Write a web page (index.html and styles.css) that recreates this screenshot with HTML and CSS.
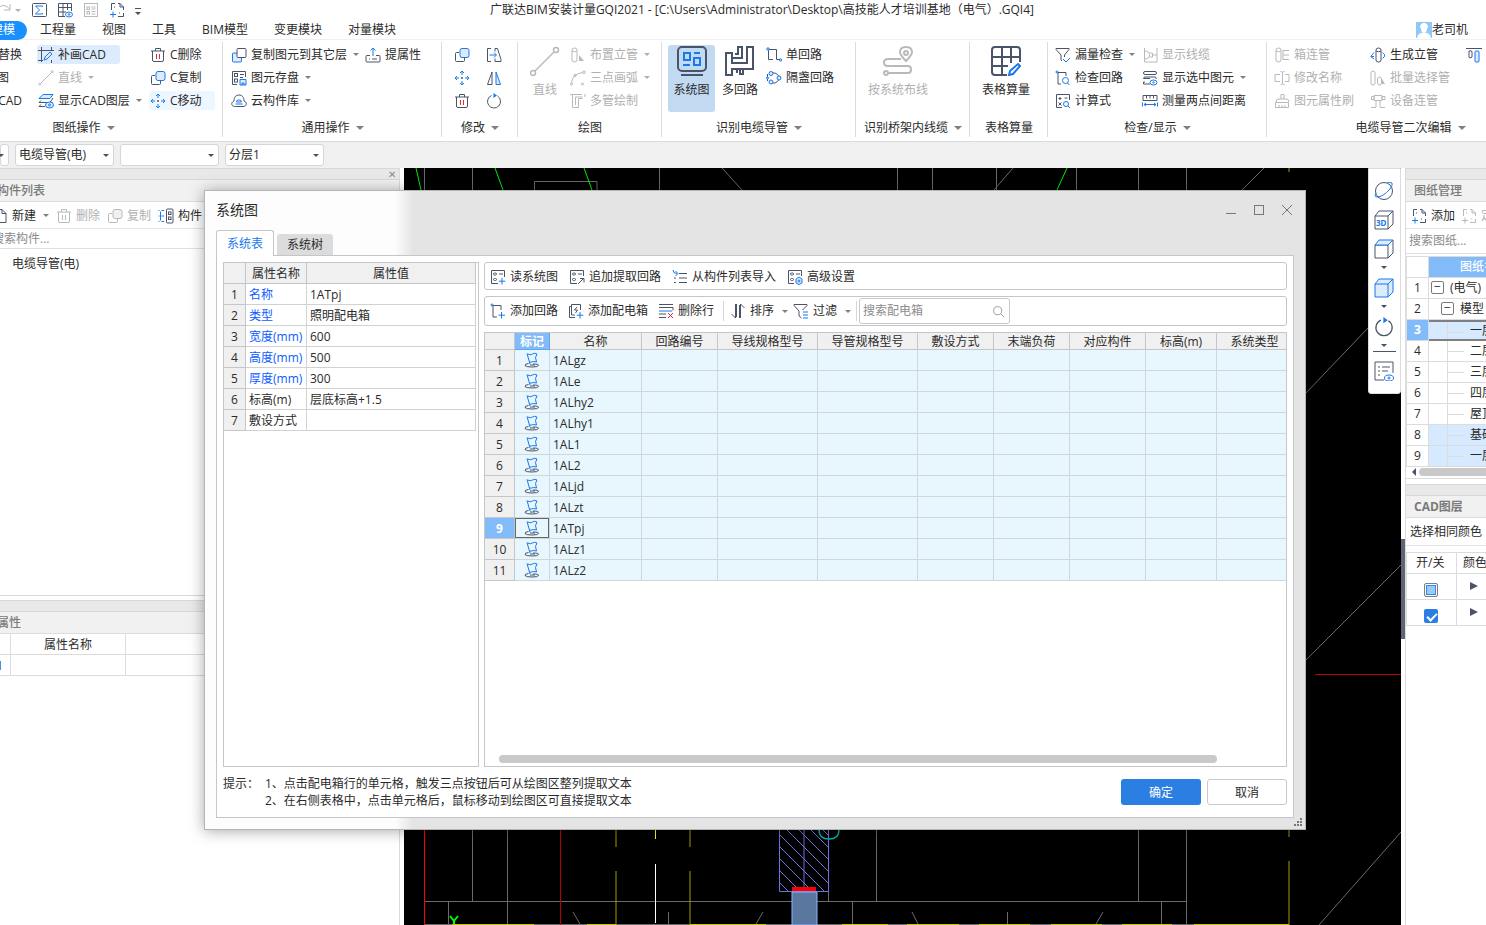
FILE: index.html
```html
<!DOCTYPE html>
<html lang="zh-CN">
<head>
<meta charset="utf-8">
<title>广联达BIM安装计量GQI2021</title>
<link rel="stylesheet" href="styles.css">
</head>
<body>
<svg class="defs" aria-hidden="true">
  <symbol id="redo" viewBox="0 0 16 16"><path d="M15 2v6H9M15 7.500Q10 1.500 5 4.500 1 8 4 13"/></symbol>
  <symbol id="sigma" viewBox="0 0 16 16"><rect x="1.500" y="1.500" width="14" height="13" rx="1"/><path class="a" d="M11.500 5V4h-7l4 4-4 4h7v-1"/></symbol>
  <symbol id="grideye" viewBox="0 0 16 16"><path d="M8 14.500H1.500v-13h13V9M1.500 5.500h13M1.500 10H9M6 1.500v13M10.500 1.500V8"/><ellipse class="a" cx="12" cy="12.500" rx="3.500" ry="2.500"/><circle class="a" cx="12" cy="12.500" r=".8"/></symbol>
  <symbol id="listbox" viewBox="0 0 16 16"><rect x="1.500" y="1.500" width="13" height="13"/><rect x="4" y="5" width="2.500" height="2.500"/><rect x="4" y="9.500" width="2.500" height="2.500"/><path d="M8.500 5h4M8.500 7h4M8.500 9.500h4M8.500 12h4"/></symbol>
  <symbol id="addpage" viewBox="0 0 16 16"><path d="M2.500 8V1.500H6M9 1.500h2l3.500 3.500v3M14.500 11v3.500H9M11 1.500V5h3.500M5 5h1M10 11h1"/><path class="a" d="M4 9.500v6M1 12.500h6"/></symbol>
  <symbol id="croppen" viewBox="0 0 16 16"><path d="M3.500 0v15M0 3.500h16M13.500 0v3M0 13.500h5M13.500 13v3"/><path class="a" d="M6 13l1-3 5-5 2 2-5 5z"/></symbol>
  <symbol id="line" viewBox="0 0 16 16"><path d="M2.500 13.500l11-11"/><circle cx="1.800" cy="14.200" r="1"/><circle cx="14.200" cy="1.800" r="1"/></symbol>
  <symbol id="layers" viewBox="0 0 16 16"><path class="af" d="M5 1.500h10l-3 4H1z"/><path d="M15 5l-3 4.500H1l2-2M1 13.500l2-2M1 13.500h6"/><ellipse class="af" cx="11.500" cy="12" rx="4" ry="3"/><circle class="a" cx="11.500" cy="12" r="1"/></symbol>
  <symbol id="trash" viewBox="0 0 16 16"><path d="M1 4h14M5.500 4V1.500h5V4M2.500 4v9q0 1.500 1.500 1.500h8q1.500 0 1.500-1.500V4"/><path class="r" d="M6.500 7v5M9.500 7v5"/></symbol>
  <symbol id="copyf" viewBox="0 0 16 16"><path d="M5 5.500H2.500q-1 0-1 1v7q0 1 1 1h7q1 0 1-1V11"/><rect class="af" x="6" y="1.500" width="9" height="9" rx="2"/></symbol>
  <symbol id="copyb" viewBox="0 0 16 16"><rect class="af" x="1.500" y="6" width="9" height="9" rx="1"/><rect class="w" x="6" y="1.500" width="9" height="9" rx="1"/></symbol>
  <symbol id="move" viewBox="0 0 16 16"><path class="a" d="M6 3l2-2 2 2M6 13l2 2 2-2M3 6L1 8l2 2M13 6l2 2-2 2M8 1v4M8 11v4M1 8h4M11 8h4"/><path d="M8 7v2M7 8h2"/></symbol>
  <symbol id="store" viewBox="0 0 16 16"><path d="M6 14.500H1.500v-13h13V7M9 4.500h4M9 7.500h3"/><rect x="3.500" y="3.500" width="3" height="3"/><rect x="3.500" y="9" width="3" height="3"/><path class="af" d="M9 9.500h6v5.500H9z"/><path class="a" d="M11 15v-2h2v2"/></symbol>
  <symbol id="cloud" viewBox="0 0 16 16"><path d="M4.500 13.500C1.500 13.500.500 12 .800 10.500 1 9 2 8.500 3 8 3 4 5 2 8 2s5 2 5 6c1.500.500 2.300 1.500 2.300 2.800 0 1.500-1 2.700-3.300 2.700z"/><path class="a" d="M4.500 11h7M5.500 9l1-2h3l1 2z"/></symbol>
  <symbol id="up" viewBox="0 0 16 16"><path d="M5 8.500H2q-1 0-1 1V14q0 1 1 1h12q1 0 1-1V9.500q0-1-1-1h-3M4 12h1M7 12h5"/><path class="a" d="M8 9V1M5.500 3.500L8 1l2.500 2.500"/></symbol>
  <symbol id="mirrorcopy" viewBox="0 0 16 16"><path d="M5 1.500H1.500v13H5M9 4.500V1.500h2.500L15 12.500v2h-6v-3"/><path class="a" d="M3.500 8H10M8 5.500L10.500 8 8 10.500"/></symbol>
  <symbol id="mirror" viewBox="0 0 16 16"><path d="M6 2v12.500H1.500z"/><path class="af" d="M10 2v12.500h4.500z"/></symbol>
  <symbol id="rotate" viewBox="0 0 16 16"><path d="M5.500 2.500a6.500 6.500 0 1 0 6 .5"/><path class="ab" d="M7.500 0l3.500 2.500L7.500 5z"/></symbol>
  <symbol id="pipe" viewBox="0 0 16 16"><path d="M2 3q0-2 2.500-2T7 3v10q0 2-2.500 2T2 13zM2 4q2.500 1.500 5 0"/><path class="k" d="M9 8l5 6H9z"/></symbol>
  <symbol id="arc" viewBox="0 0 16 16"><path d="M1.500 13Q2 4 13 2.500"/><circle cx="14" cy="2.200" r="1.300"/><circle cx="5" cy="5.500" r="1.200"/><circle cx="1.500" cy="14" r="1"/><circle cx="12.500" cy="14" r="1"/></symbol>
  <symbol id="multi" viewBox="0 0 16 16"><path d="M0 1.500h12M2.500 1.500v13h6v-9h4M5.500 4v8M5.500 4h7M15 1v3"/></symbol>
  <symbol id="single" viewBox="0 0 16 16"><path d="M2.500 2.500h8v10h3M2.500 3v9.500H7"/><circle class="af" cx="2" cy="2" r="1.200"/><circle class="af" cx="14.500" cy="13" r="1.200"/></symbol>
  <symbol id="bulb" viewBox="0 0 16 16"><path d="M4 3h5q3 1 5 5-2 4-5 5H4M1.500 4v7"/><circle class="af" cx="5" cy="3.500" r="2"/><circle class="af" cx="5" cy="12" r="2"/><circle class="af" cx="13" cy="8" r="2"/><circle class="af" cx="1.500" cy="8" r="1"/></symbol>
  <symbol id="funnelcheck" viewBox="0 0 16 16"><path d="M7 14l-1-1V8L1 2.500V1.500h13v1L9.500 8v2"/><path class="a" d="M8 12l3 3 4-4"/></symbol>
  <symbol id="checkloop" viewBox="0 0 16 16"><path d="M2 2.500h9V6M3 3v11h3"/><circle class="af" cx="2" cy="2" r="1"/><circle class="a" cx="10.500" cy="10.500" r="3"/><path class="a" d="M12.500 13l2 2"/></symbol>
  <symbol id="calc" viewBox="0 0 16 16"><path d="M7 14.500H1.500v-13h13V7M3.500 5.500h3M5 4v3M9.500 5h3M3.500 9.500l3 3M6.500 9.500l-3 3"/><circle class="a" cx="11" cy="11" r="2.500"/><path class="a" d="M13 13l2 2"/></symbol>
  <symbol id="cable" viewBox="0 0 16 16"><path d="M2.500 15V1M2.500 15H15V1M2.500 4q5 0 5 4t-5 4M7.500 6h3v4h-3M10.500 8H15"/></symbol>
  <symbol id="showsel" viewBox="0 0 16 16"><rect x="1.500" y="1.500" width="13" height="3" rx="1.500"/><path d="M14 9V8q0-1-1-1H3q-1.500 0-1.500 1.500H8M3 12H1.500v2H8"/><ellipse class="a" cx="11.500" cy="12.500" rx="3.500" ry="2.500"/><circle class="a" cx="11.500" cy="12.500" r=".7"/></symbol>
  <symbol id="measure" viewBox="0 0 16 16"><path d="M1 7.500v-5h14v5zM4.500 3v2.500M8 3v2.500M11.500 3v2.500"/><path class="a" d="M.5 9.500v4M15.500 9.500v4M2 11.500h12M4 10l-2 1.500L4 13M12 10l2 1.500-2 1.500"/></symbol>
  <symbol id="boxpipe" viewBox="0 0 16 16"><path d="M2 3q0-2 2.500-2T7 3v10q0 2-2.500 2T2 13zM2 4q2.500 1.500 5 0M9 3.500h6M9 8h6M9 12.500h6M9 3v10"/></symbol>
  <symbol id="rename" viewBox="0 0 16 16"><path d="M6 4.500H1v7h5M11 4.500h4v7h-4M8.500 2v12M6.500 1.500q2 0 2 1 0-1 2-1M6.500 14.500q2 0 2-1 0 1 2 1"/></symbol>
  <symbol id="brush" viewBox="0 0 16 16"><path d="M7 6V1.500h3V6M2 9q0-3 3-3h7q3 0 3 3M1.500 9.500h13v5h-13zM5 12v2.500M8 12v2.500M11 12v2.500"/></symbol>
  <symbol id="genpipe" viewBox="0 0 16 16"><path d="M6 3q0-2 2.500-2T11 3v10q0 2-2.500 2T6 13zM6 4q2.500 1.500 5 0"/><path class="a" d="M4 5.500L.8 9.500 4 12M12.500 5.500q3 2 2 4l-2 2M1 9.500h3"/></symbol>
  <symbol id="batch" viewBox="0 0 16 16"><path d="M1 3q0-2 2-2t2 2v10q0 2-2 2t-2-2zM7.500 9q0-2 2-2t2 2v4q0 2-2 2t-2-2z"/><path class="k" d="M12 9l3 5h-3z"/></symbol>
  <symbol id="device" viewBox="0 0 16 16"><path d="M4 3.500H1.500v3H4zM12 3.500h3v3h-3zM4 2.500h8v5H4zM6 8v6M10 8v6M1 14.500h5M10 14.500h5"/></symbol>
  <symbol id="align" viewBox="0 0 16 16"><path d="M0 1.500h16M3 4q3-1 3 1v5q-3 2-3 0z"/><rect class="af" x="9" y="4" width="4" height="11" rx="1"/></symbol>
  <symbol id="new" viewBox="0 0 16 16"><path d="M2 1.500h8l4 4v9H2zM10 1.500v4h4"/></symbol>
  <symbol id="struct" viewBox="0 0 16 16"><rect x="8.500" y="1" width="6.500" height="14" rx="1"/><rect x="10.500" y="4" width="2.500" height="2.500"/><rect x="10.500" y="9" width="2.500" height="2.500"/><path class="a" d="M.5 2.500h1M3.500 2.500H6M.5 8h1M3.500 8H6M.5 13.500h1M3.500 13.500H6M2.500 3.500v9"/></symbol>
  <symbol id="read" viewBox="0 0 16 16"><path d="M8 14.500H1.500v-13h13V8M9 5h4"/><rect x="3.500" y="4" width="3" height="2" rx="1"/><rect x="3.500" y="9.500" width="3" height="2" rx="1"/><path class="a" d="M12 9v6.500M8.800 12.200h6.500"/></symbol>
  <symbol id="extract" viewBox="0 0 16 16"><path d="M8 14.500H1.500v-13h13V7M9 5h4M9 15l5-5M11 9.500h4v4"/><rect x="3.500" y="4" width="3" height="2" rx="1"/><rect x="3.500" y="9.500" width="3" height="2" rx="1"/></symbol>
  <symbol id="import" viewBox="0 0 16 16"><path d="M7 4.500h8M7 9h8M7 13.500h8M2 9h2M2 13.500h2"/><path class="a" d="M1 1q0 3.500 4 3.500M3.500 2l2.500 2.500L3.500 7"/></symbol>
  <symbol id="adv" viewBox="0 0 16 16"><path d="M7 14.500H1.500v-13h13V7M9 5h4"/><rect x="3.500" y="4" width="3" height="2" rx="1"/><rect x="3.500" y="9.500" width="3" height="2" rx="1"/><path class="af" d="M12 8l3 2v4l-3 1.500L9 14v-4z"/><circle class="a" cx="12" cy="12" r="1"/></symbol>
  <symbol id="addloop" viewBox="0 0 16 16"><path d="M2 2.500h9V7M3 3v11h4"/><circle class="af" cx="2" cy="2" r="1"/><path class="a" d="M11.500 9v6.500M8.500 12.200H15"/></symbol>
  <symbol id="addbox" viewBox="0 0 16 16"><path d="M3.500 3.500H1.500v11H7M3.500 12V1.500h9V7M3.500 12H7M9 4L6.500 7h3L7.500 10"/><path class="a" d="M12 9v6.500M8.800 12.200h6.500"/></symbol>
  <symbol id="delrow" viewBox="0 0 16 16"><path d="M1 1.500h14M1 4.500h14v3M1 11h7M1 14.500h7"/><path class="a" d="M1 8h13"/><path class="r" d="M10 10l5 5M15 10l-5 5"/></symbol>
  <symbol id="sort" viewBox="0 0 16 16"><path d="M5.500 1v14L1.500 11M10.500 15V1l4 4M6.500 1v13M9.500 15V2"/></symbol>
  <symbol id="filter" viewBox="0 0 16 16"><path d="M8.500 15L6 13V8L1 2.500V1.500h13v1L9.500 7"/><path class="a" d="M10 9h5M10 12h5M10 15h5"/></symbol>
  <symbol id="search" viewBox="0 0 16 16"><circle cx="7" cy="7" r="5"/><path d="M11 11l4 4"/></symbol>
  <symbol id="flag" viewBox="0 0 16 16"><path class="a" d="M3.500 2q3 1.500 5 0t4.500 0l-1.500 3.500 1 4.500q-3-1-5 0H5.500M3 1.500L6 12"/><path d="M4.500 11.500Q.500 12 1 13.500 2 15 8 15t6.500-1.500Q15 12 9 12M6 13h5"/></symbol>
  <symbol id="sys30" viewBox="0 0 30 30"><g stroke-width="2"><rect x="1" y="1" width="28" height="24" rx="4"/><path d="M4 29h22"/><path class="a" d="M7 7h6v7H7zM17 7h6M17 12h6v7h-6zM6 19h7"/></g></symbol>
  <symbol id="loops30" viewBox="0 0 30 30"><g stroke-width="2"><path d="M1 7h6v10h15V1h6v22H7v6H1zM7 12h10V1h-4v7h-3M12 23v4M15 23v5h3v-5"/></g></symbol>
  <symbol id="line30" viewBox="0 0 30 30"><g stroke-width="1.500"><path d="M5 25L24 6"/><circle cx="3" cy="27" r="2.500"/><circle cx="26" cy="4" r="2.500"/></g></symbol>
  <symbol id="route30" viewBox="0 0 30 30"><g stroke-width="2"><path d="M23 15q-6-6-6-9 0-5 6-5t6 5q0 3-6 9zM18 13H5q-4 0-4 3.500T5 20h20q3 0 3 3.500T25 27H6"/><circle cx="23" cy="7" r="2"/><circle cx="3" cy="27" r="2"/></g></symbol>
  <symbol id="table30" viewBox="0 0 30 30"><g stroke-width="2"><path d="M16 29H4q-3 0-3-3V4q0-3 3-3h22q3 0 3 3v12M1 11h28M1 20h16M11 1v28M20 1v16"/><path class="a" d="M19 25l8-7 2 2-7 8-4 1z"/></g></symbol>
  <symbol id="orbit" viewBox="0 0 20 20"><circle cx="10" cy="10" r="8.500"/><path class="a" d="M2 12q-2 4 1 4 6 0 13-8 3-4 2-6-2-1-5 0"/></symbol>
  <symbol id="cube" viewBox="0 0 20 20"><path d="M1 6h13v13H1zM1 6l4-5h14v13l-5 5M14 6l5-5"/></symbol>
  <symbol id="cubetop" viewBox="0 0 20 20"><path d="M1 6h13v13H1zM19 1v13l-5 5"/><path class="af" d="M1 6l4-5h14l-5 5z"/></symbol>
  <symbol id="cubefull" viewBox="0 0 20 20"><path class="af" d="M1 6l4-5h14v13l-5 5H1z"/><path class="a" d="M1 6h13v13M14 6l5-5"/></symbol>
  <symbol id="listeye" viewBox="0 0 20 20"><path d="M10 19H1V1h18v11M4 6h2M8 6h8M4 10h2M8 10h6M4 14h2"/><ellipse class="a" cx="15" cy="17" rx="4.500" ry="3"/><circle class="a" cx="15" cy="17" r="1"/></symbol>
</svg>

<div class="app">
  <header class="titlebar">
    <nav class="quick" aria-label="快速访问">
      <button class="redo off" aria-label="重做"><svg class="ic"><use href="#redo"/></svg><i class="caret"></i></button>
      <button aria-label="汇总"><svg class="ic"><use href="#sigma"/></svg></button>
      <button aria-label="查看表格"><svg class="ic"><use href="#grideye"/></svg></button>
      <button class="off" aria-label="列表"><svg class="ic"><use href="#listbox"/></svg></button>
      <button aria-label="添加图纸"><svg class="ic"><use href="#addpage"/></svg></button>
      <button class="more" aria-label="更多"><i class="caret dark"></i></button>
    </nav>
    <h1>广联达BIM安装计量GQI2021 - [C:\Users\Administrator\Desktop\高技能人才培训基地（电气）.GQI4]</h1>
  </header>
  <nav class="menu">
    <a class="active" href="#"><span>建模</span></a><a href="#">工程量</a><a href="#">视图</a><a href="#">工具</a><a href="#">BIM模型</a><a href="#">变更模块</a><a href="#">对量模块</a>
    <span class="user"><svg viewBox="0 0 16 16"><rect width="16" height="16" fill="#91c8fa"/><path d="M4 6q0-5 4-5t4 5zM5 6h6q0 5-3 5T5 6zM1 16q1-5 5-5h4q4 0 5 5z" fill="#fff"/></svg>老司机</span>
  </nav>

  <section class="ribbon">
    <div class="group g1">
      <div class="body">
        <div class="col cut"><button>替换</button><button class="wide">图</button><button>CAD</button></div>
        <div class="col"><button class="sel"><svg class="ic"><use href="#croppen"/></svg>补画CAD</button><button class="off"><svg class="ic"><use href="#line"/></svg>直线<i class="caret"></i></button><button><svg class="ic"><use href="#layers"/></svg>显示CAD图层<i class="caret"></i></button></div>
        <div class="col"><button><svg class="ic"><use href="#trash"/></svg>C删除</button><button><svg class="ic"><use href="#copyf"/></svg>C复制</button><button class="hover"><svg class="ic"><use href="#move"/></svg>C移动</button></div>
      </div>
      <div class="name">图纸操作<i class="caret big"></i></div>
    </div>
    <div class="group g2">
      <div class="body">
        <div class="col"><button><svg class="ic"><use href="#copyb"/></svg>复制图元到其它层<i class="caret"></i></button><button><svg class="ic"><use href="#store"/></svg>图元存盘<i class="caret"></i></button><button><svg class="ic"><use href="#cloud"/></svg>云构件库<i class="caret"></i></button></div>
        <div class="col"><button><svg class="ic"><use href="#up"/></svg>提属性</button></div>
      </div>
      <div class="name">通用操作<i class="caret big"></i></div>
    </div>
    <div class="group g3">
      <div class="body">
        <div class="col"><button aria-label="复制"><svg class="ic"><use href="#copyf"/></svg></button><button aria-label="移动"><svg class="ic"><use href="#move"/></svg></button><button aria-label="删除"><svg class="ic"><use href="#trash"/></svg></button></div>
        <div class="col"><button aria-label="延伸"><svg class="ic"><use href="#mirrorcopy"/></svg></button><button aria-label="镜像"><svg class="ic"><use href="#mirror"/></svg></button><button aria-label="旋转"><svg class="ic"><use href="#rotate"/></svg></button></div>
      </div>
      <div class="name">修改<i class="caret big"></i></div>
    </div>
    <div class="group g4">
      <div class="body">
        <button class="tall off"><svg class="ic30"><use href="#line30"/></svg>直线</button>
        <div class="col off"><button><svg class="ic"><use href="#pipe"/></svg>布置立管<i class="caret"></i></button><button><svg class="ic"><use href="#arc"/></svg>三点画弧<i class="caret"></i></button><button><svg class="ic"><use href="#multi"/></svg>多管绘制</button></div>
      </div>
      <div class="name">绘图</div>
    </div>
    <div class="group g5">
      <div class="body">
        <button class="tall pressed"><svg class="ic30"><use href="#sys30"/></svg>系统图</button>
        <button class="tall"><svg class="ic30"><use href="#loops30"/></svg>多回路</button>
        <div class="col"><button><svg class="ic"><use href="#single"/></svg>单回路</button><button><svg class="ic"><use href="#bulb"/></svg>隔盏回路</button></div>
      </div>
      <div class="name">识别电缆导管<i class="caret big"></i></div>
    </div>
    <div class="group g6">
      <div class="body"><button class="tall off"><svg class="ic30"><use href="#route30"/></svg>按系统布线</button></div>
      <div class="name">识别桥架内线缆<i class="caret big"></i></div>
    </div>
    <div class="group g7">
      <div class="body"><button class="tall"><svg class="ic30"><use href="#table30"/></svg>表格算量</button></div>
      <div class="name">表格算量</div>
    </div>
    <div class="group g8">
      <div class="body">
        <div class="col"><button><svg class="ic"><use href="#funnelcheck"/></svg>漏量检查<i class="caret"></i></button><button><svg class="ic"><use href="#checkloop"/></svg>检查回路</button><button><svg class="ic"><use href="#calc"/></svg>计算式</button></div>
        <div class="col"><button class="off"><svg class="ic"><use href="#cable"/></svg>显示线缆</button><button><svg class="ic"><use href="#showsel"/></svg>显示选中图元<i class="caret"></i></button><button><svg class="ic"><use href="#measure"/></svg>测量两点间距离</button></div>
      </div>
      <div class="name">检查/显示<i class="caret big"></i></div>
    </div>
    <div class="group g9">
      <div class="body">
        <div class="col off"><button><svg class="ic"><use href="#boxpipe"/></svg>箱连管</button><button><svg class="ic"><use href="#rename"/></svg>修改名称</button><button><svg class="ic"><use href="#brush"/></svg>图元属性刷</button></div>
        <div class="col"><button><svg class="ic"><use href="#genpipe"/></svg>生成立管</button><button class="off"><svg class="ic"><use href="#batch"/></svg>批量选择管</button><button class="off"><svg class="ic"><use href="#device"/></svg>设备连管</button></div>
        <div class="col"><button aria-label="对齐"><svg class="ic"><use href="#align"/></svg></button></div>
      </div>
      <div class="name">电缆导管二次编辑<i class="caret big"></i></div>
    </div>
  </section>

  <div class="filters">
    <label class="pick first"><select aria-label="楼层"><option></option></select></label>
    <label class="pick"><select aria-label="构件类型"><option>电缆导管(电)</option></select></label>
    <label class="pick"><select aria-label="构件"><option></option></select></label>
    <label class="pick"><select aria-label="分层"><option>分层1</option></select></label>
  </div>

  <main class="work">
    <aside class="left">
      <div class="strip"><button class="x" aria-label="关闭">✕</button></div>
      <h2><span>构件列表</span></h2>
      <div class="tools">
        <button class="newbtn"><svg class="ic"><use href="#new"/></svg>新建<i class="caret"></i></button>
        <button class="off"><svg class="ic"><use href="#trash"/></svg>删除</button>
        <button class="off"><svg class="ic"><use href="#copyf"/></svg>复制</button>
        <button><svg class="ic"><use href="#struct"/></svg>构件</button>
      </div>
      <div class="find"><input type="text" aria-label="搜索构件" placeholder="搜索构件..."></div>
      <div class="tree">电缆导管(电)</div>
      <div class="strip"></div>
      <h2 class="short"><span>属性</span></h2>
      <table class="props"><tr><th class="n"></th><th class="k">属性名称</th><th></th></tr><tr><td class="n"></td><td class="mark"></td><td></td></tr></table>
    </aside>

    <div class="canvas">
      <svg class="cad" viewBox="404 168 997 757" preserveAspectRatio="xMinYMin slice">
        <g stroke="#6a6a6a" fill="none" stroke-width="1">
          <path d="M424.500 168v22M472.500 168v22M534.500 190v-8.500h62.500v8.500M659.500 168v22M722 168l20 22M897.500 168v22M932.500 168v22M996.500 168v22M1013 168l-19 22M1076.500 168v22M1138.500 168v22M1186.500 168v22M1264 168l-22 22"/>
          <path d="M1368 328l-63 66M1401 565l-96 96M1401 832l-82 93"/>
          <path d="M472.500 830v71M507.500 830v95M448.500 901v24M425 901.500h761M828.500 891v10M876.500 830v71M852.500 901v24M1138.500 830v71M1186.500 830v95M1161.500 901v24M425 924.500h864M573 912l7 12M668.500 912v12M763 912l-7 12M912 912l6 12M1007.500 912v12M1103 912l-7 12"/>
        </g>
        <path d="M416 168l5 22M495 168l8 22M584 168l8 22M1067 168l-10 22" stroke="#0e0" fill="none"/>
        <path d="M450 916l4 5 4-5M454 920v5" stroke="#0f0" fill="none" stroke-width="2"/>
        <path d="M424.500 830v95" stroke="#f00"/><path d="M560.500 830v95M1315 674.500h86" stroke="#b00"/>
        <path d="M616 830v17M616 871v54M690 830v17M690 871v54M1289 168v4M1289 830v7M1289 861v64" stroke="#a09e00" fill="none" stroke-width="1"/>
        <path d="M452 924.500h82M587 924.500h29M690 924.500h76M842 924.500h46M907 924.500h52M979 924.500h51M1051 924.500h51M1122 924.500h50M1194 924.500h95" stroke="#c8c600"/>
        <path d="M655.500 830v9" stroke="#ff0"/><path d="M655.500 864v59" stroke="#fff"/>
        <g stroke="#6f6fe0" fill="none"><path d="M779.500 830v61.500h49V830M804 830v60M779 882l9 9M779 870l21 21M779 858l33 33M779 846l45 45M779 834l50 50M787 830l42 42M799 830l30 30M811 830l18 18M823 830l6 6"/></g>
        <path d="M819 830q0 9 10 9t10-9" stroke="#00b4b4" fill="none" stroke-width="1.500"/>
        <path d="M792 892h25v33h-25z" fill="#5a789f" stroke="#8ab4ff"/><path d="M792 887h24v4h-24z" fill="#f00"/>
      </svg>
      <div class="views">
        <button aria-label="动态观察"><svg class="ic20"><use href="#orbit"/></svg></button>
        <button class="three" aria-label="三维"><svg class="ic20"><use href="#cube"/></svg><span>3D</span></button>
        <button aria-label="俯视"><svg class="ic20"><use href="#cubetop"/></svg><i class="caret dark"></i></button>
        <button aria-label="实体"><svg class="ic20"><use href="#cubefull"/></svg><i class="caret dark"></i></button>
        <button class="line" aria-label="旋转视图"><svg class="ic20"><use href="#rotate"/></svg><i class="caret dark"></i></button>
        <button aria-label="显示设置"><svg class="ic20"><use href="#listeye"/></svg></button>
      </div>
    </div>
    <div class="split"><i></i></div>

    <aside class="right">
      <div class="strip"></div>
      <h2>图纸管理</h2>
      <div class="tools"><button><svg class="ic"><use href="#addpage"/></svg>添加</button><button class="off"><svg class="ic"><use href="#addpage"/></svg>定位</button></div>
      <div class="find"><input type="text" aria-label="搜索图纸" placeholder="搜索图纸..."></div>
      <table class="sheets">
        <tr><th class="n"></th><th class="h">图纸名称</th></tr>
        <tr><td class="n">1</td><td><b class="box">−</b>(电气)</td></tr>
        <tr><td class="n">2</td><td class="d1"><b class="box">−</b>模型</td></tr>
        <tr class="cur"><td class="n">3</td><td class="d2">一层</td></tr>
        <tr><td class="n">4</td><td class="d2">二层</td></tr>
        <tr><td class="n">5</td><td class="d2">三层</td></tr>
        <tr><td class="n">6</td><td class="d2">四层</td></tr>
        <tr><td class="n">7</td><td class="d2">屋顶</td></tr>
        <tr class="lit"><td class="n">8</td><td class="d2">基础</td></tr>
        <tr class="lit"><td class="n">9</td><td class="d2">一层</td></tr>
      </table>
      <div class="hbar"><i class="arrow"></i><i class="thumb"></i></div>
      <div class="strip"></div>
      <h2 class="bold">CAD图层</h2>
      <div class="tools pickcolor"><button>选择相同颜色</button></div>
      <table class="cadlayers">
        <tr><th class="on">开/关</th><th>颜色</th></tr>
        <tr><td><input class="part" type="checkbox" aria-label="图层一"></td><td><i class="tri"></i></td></tr>
        <tr><td><input type="checkbox" checked aria-label="图层二"></td><td><i class="tri"></i></td></tr>
      </table>
    </aside>
  </main>

  <section class="dialog" role="dialog" aria-label="系统图">
    <div class="dtitle"><h2>系统图</h2>
      <button aria-label="最小化"><svg viewBox="0 0 12 12"><path d="M1 9.500h10"/></svg></button>
      <button aria-label="最大化"><svg viewBox="0 0 12 12"><rect x="1.500" y="1.500" width="9" height="9"/></svg></button>
      <button aria-label="关闭"><svg viewBox="0 0 12 12"><path d="M1 1l10 10M11 1L1 11"/></svg></button>
    </div>
    <div class="tabs"><button class="on">系统表</button><button>系统树</button></div>
    <div class="panel">
      <div class="panes">
        <div class="attrs">
          <table>
            <tr><th class="n"></th><th class="k">属性名称</th><th>属性值</th></tr>
            <tr><td class="n">1</td><td class="blue">名称</td><td>1ATpj</td></tr>
            <tr><td class="n">2</td><td class="blue">类型</td><td>照明配电箱</td></tr>
            <tr><td class="n">3</td><td class="blue">宽度(mm)</td><td>600</td></tr>
            <tr><td class="n">4</td><td class="blue">高度(mm)</td><td>500</td></tr>
            <tr><td class="n">5</td><td class="blue">厚度(mm)</td><td>300</td></tr>
            <tr><td class="n">6</td><td>标高(m)</td><td>层底标高+1.5</td></tr>
            <tr><td class="n">7</td><td>敷设方式</td><td></td></tr>
          </table>
        </div>
        <div class="main">
          <div class="bar">
            <button><svg class="ic"><use href="#read"/></svg>读系统图</button>
            <button><svg class="ic"><use href="#extract"/></svg>追加提取回路</button>
            <button><svg class="ic"><use href="#import"/></svg>从构件列表导入</button>
            <button><svg class="ic"><use href="#adv"/></svg>高级设置</button>
          </div>
          <div class="bar second">
            <button><svg class="ic"><use href="#addloop"/></svg>添加回路</button>
            <button><svg class="ic"><use href="#addbox"/></svg>添加配电箱</button>
            <button><svg class="ic"><use href="#delrow"/></svg>删除行</button>
            <span class="sep"></span>
            <button class="drop"><svg class="ic"><use href="#sort"/></svg>排序<i class="caret"></i></button>
            <button class="drop"><svg class="ic"><use href="#filter"/></svg>过滤<i class="caret"></i></button>
            <span class="sep"></span>
            <label class="seek"><input type="text" aria-label="搜索配电箱" placeholder="搜索配电箱"><svg class="ic"><use href="#search"/></svg></label>
          </div>
          <div class="gridbox">
            <table>
              <colgroup><col class="c30"><col class="c35"><col class="c92"><col class="c76"><col class="c100"><col class="c100"><col class="c76"><col class="c76"><col class="c76"><col class="c71"><col class="c76"></colgroup>
              <tr><th></th><th class="hot">标记</th><th>名称</th><th>回路编号</th><th>导线规格型号</th><th>导管规格型号</th><th>敷设方式</th><th>末端负荷</th><th>对应构件</th><th>标高(m)</th><th>系统类型</th></tr>
              <tr><td class="n">1</td><td class="f"><svg class="ic"><use href="#flag"/></svg></td><td>1ALgz</td><td></td><td></td><td></td><td></td><td></td><td></td><td></td><td></td></tr>
              <tr><td class="n">2</td><td class="f"><svg class="ic"><use href="#flag"/></svg></td><td>1ALe</td><td></td><td></td><td></td><td></td><td></td><td></td><td></td><td></td></tr>
              <tr><td class="n">3</td><td class="f"><svg class="ic"><use href="#flag"/></svg></td><td>1ALhy2</td><td></td><td></td><td></td><td></td><td></td><td></td><td></td><td></td></tr>
              <tr><td class="n">4</td><td class="f"><svg class="ic"><use href="#flag"/></svg></td><td>1ALhy1</td><td></td><td></td><td></td><td></td><td></td><td></td><td></td><td></td></tr>
              <tr><td class="n">5</td><td class="f"><svg class="ic"><use href="#flag"/></svg></td><td>1AL1</td><td></td><td></td><td></td><td></td><td></td><td></td><td></td><td></td></tr>
              <tr><td class="n">6</td><td class="f"><svg class="ic"><use href="#flag"/></svg></td><td>1AL2</td><td></td><td></td><td></td><td></td><td></td><td></td><td></td><td></td></tr>
              <tr><td class="n">7</td><td class="f"><svg class="ic"><use href="#flag"/></svg></td><td>1ALjd</td><td></td><td></td><td></td><td></td><td></td><td></td><td></td><td></td></tr>
              <tr><td class="n">8</td><td class="f"><svg class="ic"><use href="#flag"/></svg></td><td>1ALzt</td><td></td><td></td><td></td><td></td><td></td><td></td><td></td><td></td></tr>
              <tr class="cur"><td class="n">9</td><td class="f"><svg class="ic"><use href="#flag"/></svg></td><td>1ATpj</td><td></td><td></td><td></td><td></td><td></td><td></td><td></td><td></td></tr>
              <tr><td class="n">10</td><td class="f"><svg class="ic"><use href="#flag"/></svg></td><td>1ALz1</td><td></td><td></td><td></td><td></td><td></td><td></td><td></td><td></td></tr>
              <tr><td class="n">11</td><td class="f"><svg class="ic"><use href="#flag"/></svg></td><td>1ALz2</td><td></td><td></td><td></td><td></td><td></td><td></td><td></td><td></td></tr>
            </table>
            <div class="scroll"><i></i></div>
          </div>
        </div>
      </div>
      <div class="foot">
        <span class="tip">提示：</span>
        <p>1、点击配电箱行的单元格，触发三点按钮后可从绘图区整列提取文本<br>2、在右侧表格中，点击单元格后，鼠标移动到绘图区可直接提取文本</p>
        <button class="ok">确定</button><button class="cancel">取消</button>
      </div>
    </div>
    <svg class="grip" viewBox="0 0 8 8"><path d="M6 0h2v2H6zM3 3h2v2H3zM6 3h2v2H6zM0 6h2v2H0zM3 6h2v2H3zM6 6h2v2H6z"/></svg>
  </section>
</div>
</body>
</html>
```

FILE: styles.css
```css
* { box-sizing: border-box; }
body { margin: 0; background: #fff; color: #2b2b2b; font: 12px/16px "Open Sans", "Noto Sans CJK SC", sans-serif; overflow: hidden; }
button { font: inherit; color: inherit; background: none; border: 0; padding: 0; white-space: nowrap; display: flex; align-items: center; }
input, select { font: inherit; color: inherit; }
h1, h2, p { margin: 0; font-size: 12px; font-weight: 400; }
table { border-collapse: separate; border-spacing: 0; table-layout: fixed; }
th, td { padding: 0; font-weight: 400; white-space: nowrap; overflow: hidden; line-height: 16px; }
a { color: inherit; text-decoration: none; }
.defs { position: absolute; width: 0; height: 0; }

.ic, .ic20, .ic30 { width: 16px; height: 16px; flex: none; fill: none; stroke: currentColor; color: #4a5468; --ac: #1a78ea; --af: #dcebfd; --rd: #e02c2c; }
.ic20 { width: 20px; height: 20px; }
.ic30 { width: 30px; height: 30px; }
.a { stroke: var(--ac); }
.af { stroke: var(--ac); fill: var(--af); }
.ab { stroke: none; fill: var(--ac); }
.r { stroke: var(--rd); }
.w { fill: #fff; }
.k { fill: currentColor; stroke: none; }
.off { color: #b0b0b0; }
.off .ic, .off .ic30 { color: #b9b9b9; --ac: #b9b9b9; --af: #f0f0f0; --rd: #b9b9b9; }
.caret { border: 3px solid transparent; border-top-color: #808080; border-bottom: 0; flex: none; }
.caret.big { border-width: 4px 4px 0; }
.caret.dark { border-top-color: #4a5060; }
.off .caret { border-top-color: #b0b0b0; }

.app { height: 100vh; min-height: 640px; display: flex; flex-direction: column; position: relative; overflow: hidden; }
.titlebar { height: 20px; display: flex; align-items: center; }
.quick { width: 160px; display: flex; align-items: center; gap: 10px; flex: none; }
.redo { width: 21px; gap: 4px; justify-content: flex-end; overflow: hidden; }
.more { border-top: 1px solid #4a5060; padding-top: 3px; margin: 3px 0 0; }
.titlebar h1 { flex: 1; text-align: center; padding-right: 122px; white-space: nowrap; }
.menu { height: 20px; padding-top: 1px; display: flex; align-items: center; border-bottom: 1px solid #f0f0f0; }
.menu a { padding: 0 13px; }
.menu .active { width: 27px; height: 19px; padding: 0 12px 0 0; background: #1890ff; color: #fff; border-radius: 0 10px 10px 0; display: flex; align-items: center; justify-content: flex-end; overflow: hidden; }
.active span { white-space: nowrap; }
.user { margin-left: auto; padding-right: 18px; display: flex; align-items: center; }
.user svg { width: 16px; height: 16px; }

.ribbon { display: flex; border-bottom: 1px solid #d9dadb; overflow: hidden; flex: none; }
.group { flex: none; padding-top: 3px; position: relative; }
.group::after { content: ""; position: absolute; right: 0; top: 2px; bottom: 4px; width: 1px; background: #dcdcdc; }
.body { display: flex; height: 69px; }
.col { display: flex; flex-direction: column; align-items: flex-start; flex: none; }
.col button { height: 19px; margin: 2px 0; padding: 0 1px; gap: 4px; border-radius: 3px; }
.col .caret { margin-left: 2px; }
.name { height: 29px; padding-top: 2px; display: flex; align-items: center; justify-content: center; gap: 6px; white-space: nowrap; }
.tall { flex-direction: column; height: 67px; margin-top: 2px; padding-top: 1px; gap: 6px; border-radius: 3px; flex: none; }
.col .sel { background: #dcebfd; padding-right: 14px; }
.col .hover { background: #eef6ff; padding-right: 13px; }
.pressed { background: #c2d9f2; }
.g1 { width: 223px; }
.g1 .name { padding-right: 56px; }
.g1 .col { width: 112px; }
.g1 .cut { width: 23px; align-items: flex-end; overflow: hidden; margin-right: 14px; }
.g1 .cut .wide { padding-right: 14px; }
.g2 { width: 219px; padding-left: 7px; }
.g2 .name { padding-right: 7px; }
.g2 .col { width: 134px; }
.g3 { width: 76px; }
.g3 .body { padding-left: 11px; gap: 14px; }
.g4 { width: 144px; }
.g4 .body { padding-left: 12px; gap: 9px; }
.g5 { width: 194px; }
.g5 .body { padding-left: 6px; gap: 7px; }
.g5 .pressed { width: 47px; }
.g6 { width: 114px; }
.g7 { width: 78px; }
.g6 .body { padding-left: 12px; }
.g7 .body { padding-left: 12px; }
.g8 { width: 219px; }
.g8 .body { padding-left: 6px; }
.g8 .col { width: 87px; }
.g9 { width: 287px; }
.g9 .body { padding-left: 6px; }
.g9 .col { width: 96px; }

.filters { height: 26px; background: #f0f0f0; display: flex; align-items: center; gap: 6px; flex: none; }
.pick { position: relative; width: 99px; }
.pick.first { width: 9px; }
.pick select { appearance: none; display: block; width: 100%; height: 22px; padding: 0 3px; border: 1px solid #d6d6da; border-radius: 3px; background: #fff; }
.pick::after { content: ""; position: absolute; right: 5px; top: 10px; border: 3px solid transparent; border-top-color: #4a5060; border-bottom: 0; }

.work { flex: 1; display: flex; min-height: 0; }
.left { width: 400px; border-right: 1px solid #dcdcdc; display: flex; flex-direction: column; flex: none; }
.strip { height: 12px; background: #e8e8e8; border: 1px solid #d8d8d8; border-width: 1px 0; display: flex; justify-content: flex-end; flex: none; }
.x { font-size: 10px; color: #888; padding-right: 3px; }
.work h2 { height: 22px; background: #f1f1f1; border-bottom: 1px solid #dcdcdc; color: #7a7a7a; font-weight: 500; display: flex; align-items: center; flex: none; }
.left h2 { width: 45px; justify-content: flex-end; min-width: 100%; padding-right: calc(100% - 45px); }
.left h2.short { padding-right: calc(100% - 21px); }
.left h2 span { flex: none; }
.work .tools { height: 27px; padding-top: 1px; display: flex; align-items: center; gap: 7px; border-bottom: 1px solid #e4e4e4; overflow: hidden; flex: none; }
.tools button { gap: 4px; flex: none; }
.left .newbtn { width: 49px; justify-content: flex-end; overflow: hidden; }
.newbtn .caret { margin-left: 3px; }
.find { height: 20px; border-bottom: 1px solid #e0e0e0; display: flex; align-items: center; flex: none; overflow: hidden; }
.find input { border: 0; padding: 0; width: 100%; background: none; outline: 0; }
.left .find { width: 48px; min-width: 100%; }
.left .find input { text-indent: -8px; }
input::placeholder { color: #8c8c8c; opacity: 1; }
.tree { flex: 1; padding: 7px 12px; border-bottom: 1px solid #d8d8d8; margin-bottom: 4px; }
.props { width: 100%; margin-bottom: 249px; }
.props th, .props td { height: 21px; border: 1px solid #dcdcdc; border-width: 0 1px 1px 0; padding-top: 1px; }
.props .n { width: 11px; }
.props td.n { background: linear-gradient(#4a90e2, #4a90e2) 0 6px / 1px 9px no-repeat; }
.props .k { width: 115px; }

.canvas { flex: 1; margin-left: 4px; background: #000; position: relative; min-width: 0; overflow: hidden; }
.cad { display: block; width: 100%; height: 100%; }
.views { position: absolute; right: 0; top: 0; width: 33px; padding: 12px 1px 12px 0; background: #fff; border: 1px solid #dcdcdc; border-radius: 0 0 3px 3px; display: flex; flex-direction: column; align-items: center; gap: 9px; }
.views button { flex-direction: column; gap: 7px; position: relative; }
.views .line { padding-bottom: 4px; border-bottom: 1px solid #4a5468; width: 23px; }
.three span { position: absolute; left: 2px; top: 8px; font-size: 8px; line-height: 10px; font-weight: 700; color: #1a78ea; }
.split { width: 4px; display: flex; align-items: center; flex: none; }
.split i { width: 4px; height: 100px; background: #5c6674; margin-top: 84px; }
.right { width: 81px; border-left: 1px solid #dcdcdc; overflow: hidden; flex: none; }
.right h2 { padding-left: 8px; }
.right .bold { font-weight: 700; }
.right .tools { padding-left: 5px; gap: 6px; }
.right .find { height: 25px; padding-left: 3px; }
.right table { width: 140px; border-left: 1px solid #dcdcdc; }
.sheets { margin-top: 2px; border-top: 1px solid #dcdcdc; }
.sheets th, .sheets td { height: 21px; border: 1px solid #dcdcdc; border-width: 0 1px 1px 0; }
.sheets .n { width: 22px; text-align: center; }
.sheets .h { background: #82bbfa; color: #fff; font-weight: 500; padding-left: 31px; text-align: left; }
.sheets .d1 { padding-left: 10px; }
.sheets .d2 { padding-left: 41px; background: linear-gradient(#dcdcdc, #dcdcdc) 18px 0 / 1px 100% no-repeat, linear-gradient(#dcdcdc, #dcdcdc) 19px 10px / 16px 1px no-repeat; }
.sheets .lit td.d2, .sheets .cur td.d2 { background-color: #d5e9ff; }
.sheets .cur td.d2 { border-top: 2px solid #7f7f7f; border-bottom: 2px solid #7f7f7f; line-height: 14px; }
.sheets .cur .n { background: #82bbfa; color: #fff; font-weight: 700; }
.box { display: inline-block; width: 13px; height: 13px; line-height: 10px; border: 1px solid #7a7a7a; border-radius: 2px; margin: 0 6px 0 2px; text-align: center; font-weight: 400; vertical-align: 1px; }
.hbar { height: 12px; margin-bottom: 5px; border-bottom: 1px solid #dcdcdc; display: flex; align-items: center; gap: 3px; padding: 0 0 2px 6px; }
.arrow { border: 4px solid transparent; border-right-color: #4a5468; border-left: 0; }
.thumb { flex: 1; height: 8px; background: #c9c9c9; border-radius: 4px 0 0 4px; }
.right .pickcolor { padding-left: 4px; height: 28px; }
.cadlayers { margin-top: 6px; border-top: 1px solid #dcdcdc; }
.cadlayers th, .cadlayers td { height: 26px; border: 1px solid #dcdcdc; border-width: 0 1px 1px 0; padding-left: 6px; text-align: left; }
.cadlayers th { height: 21px; }
.cadlayers .on { width: 50px; padding-left: 9px; }
.cadlayers td:first-child { padding: 6px 0 0 17px; }
.cadlayers td:last-child { padding: 0 0 2px 13px; }
.cadlayers input { appearance: none; display: block; margin: 0; width: 14px; height: 14px; border-radius: 2px; background: #2b7fe3; position: relative; }
.cadlayers input:checked::after { content: ""; position: absolute; left: 5px; top: 2px; width: 4px; height: 8px; border: solid #fff; border-width: 0 2px 2px 0; transform: rotate(45deg); }
.cadlayers .part { border: 1px solid #7f7f7f; background: #9ccaff; box-shadow: inset 0 0 0 1px #fff, inset 0 0 0 2px #2b8cf0; }
.tri { display: inline-block; border: 4px solid transparent; border-left: 8px solid #4a5468; border-right: 0; }

.dialog { position: absolute; left: 204px; right: 180px; top: 190px; bottom: 95px; border: 1px solid #b4b6b5; background: linear-gradient(90deg, #fdfdfd 190px, #e4e4e4 208px); box-shadow: 0 1px 14px rgba(0, 0, 0, .35); padding: 0 11px 11px; display: flex; flex-direction: column; }
.dtitle { height: 38px; display: flex; align-items: center; gap: 16px; padding-right: 1px; flex: none; }
.dtitle h2 { flex: 1; font-size: 14px; }
.dtitle svg { width: 12px; height: 12px; fill: none; stroke: #777; display: block; }
.tabs { display: flex; align-items: flex-end; gap: 3px; height: 26px; flex: none; }
.tabs button { width: 56px; height: 21px; padding-top: 1px; justify-content: center; background: #dcdcdc; border-radius: 3px 3px 0 0; }
.tabs .on { width: 58px; height: 26px; background: #fff; border: 1px solid #c3c6ca; border-bottom: 0; color: #1a78ea; margin: 0 0 -1px; position: relative; }
.panel { flex: 1; min-height: 0; background: #fff; border: 1px solid #c3c6ca; padding: 6px; display: flex; flex-direction: column; }
.panes { flex: 1; display: flex; gap: 5px; min-height: 0; }
.attrs { width: 256px; border: 1px solid #c3c6ca; flex: none; }
.attrs table { width: 252px; }
.attrs th, .attrs td { height: 21px; border: 1px solid #d2d2d2; border-width: 0 1px 1px 0; padding: 1px 0 0 3px; }
.attrs th, .attrs .n, .gridbox th, .gridbox .n { background: #f0f0f0; border-color: #c3c6ca; text-align: center; padding: 1px 0 0; }
.attrs .n { width: 22px; }
.attrs .k { width: 61px; }
.blue { color: #0a5cff; }
.main { flex: 1; display: flex; flex-direction: column; gap: 6px; min-width: 0; }
.bar { height: 28px; border: 1px solid #c3c6ca; border-radius: 3px; display: flex; align-items: center; gap: 11px; padding: 1px 5px 0; flex: none; }
.bar button { gap: 4px; }
.second { height: 30px; gap: 10px; padding: 0 5px; }
.sep { width: 1px; height: 20px; background: #d6d6d6; margin: 0 -4px 0 -1px; }
.drop + .sep { margin: 0 -8px 0 -5px; }
.bar .drop .caret { margin-left: 4px; }
.second .drop + .drop { margin-left: -5px; }
.seek { width: 151px; height: 26px; border: 1px solid #c9c9cc; border-radius: 3px; display: flex; align-items: center; padding: 0 4px 0 3px; }
.seek input { flex: 1; min-width: 0; border: 0; padding: 0; outline: 0; }
.seek .ic { color: #888; width: 13px; height: 13px; }
.gridbox { flex: 1; min-height: 0; border: 1px solid #c3c6ca; overflow: hidden; display: flex; flex-direction: column; justify-content: space-between; }
.gridbox table { width: 808px; flex: none; }
.gridbox td { height: 21px; border: 1px solid #d2d6d9; border-width: 0 1px 1px 0; background: #e8f6fe; padding: 1px 0 0 3px; }
.gridbox th { height: 17px; border: 1px solid #c3c6ca; border-width: 0 1px 1px 0; line-height: 15px; }
.gridbox .hot { background: #82bbfa; color: #fff; font-weight: 700; border-color: #5fa6f2; }
.gridbox .f { padding: 0 0 0 9px; }
.f svg { display: block; }
.cur .f { box-shadow: inset 0 0 0 1px #666; }
.gridbox .cur .n { background: #82bbfa; color: #fff; font-weight: 700; }
.c30 { width: 30px; } .c35 { width: 35px; } .c92 { width: 92px; } .c76 { width: 76px; } .c100 { width: 100px; } .c71 { width: 71px; }
.scroll { padding: 0 69px 3px 14px; }
.scroll i { display: block; height: 8px; border-radius: 4px; background: #c9c9c9; }
.foot { display: flex; height: 44px; padding-top: 8px; align-items: flex-start; }
.foot p { flex: 1; line-height: 17px; }
.tip { width: 42px; line-height: 17px; }
.foot button { width: 80px; height: 26px; margin-top: 4px; padding-top: 1px; justify-content: center; border-radius: 3px; }
.ok { background: #2b7fe3; color: #fff; }
.foot .cancel { margin-left: 6px; border: 1px solid #c9c9c9; }
.grip { position: absolute; right: 3px; bottom: 3px; width: 8px; height: 8px; fill: #777; }
```
